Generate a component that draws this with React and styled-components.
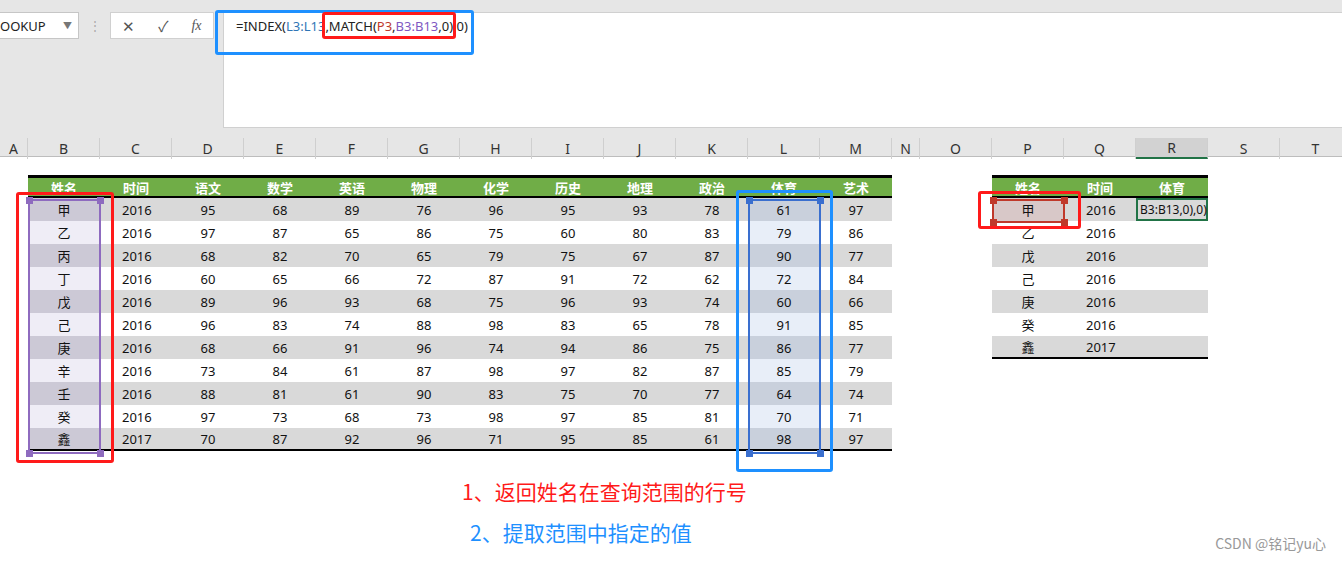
import React from "react";
import styled, { createGlobalStyle, css } from "styled-components";

const Global = createGlobalStyle`
  body { margin: 0; font-family: "Noto Sans", "Noto Sans CJK SC", sans-serif; background: #fff; }
  * { box-sizing: border-box; }
`;

const Page = styled.div`
  width: 1342px; height: 563px; position: relative; overflow: hidden; background: #fff;
`;
const Top = styled.div`
  height: 138px; background: #e6e6e6; display: flex; align-items: flex-start; padding-top: 12px; position: relative;
`;
const NameBox = styled.div`
  width: 79px; height: 27px; background: #fff; border: 1px solid #c6c6c6; border-left: none;
  display: flex; align-items: center; justify-content: space-between; padding: 0 6px 0 0;
  font-size: 13px; color: #222;
`;
const Caret = styled.span`color: #777; font-size: 9px;`;
const Dots = styled.div`
  width: 31px; text-align: center; color: #aaa; font-size: 12px; line-height: 27px;
`;
const Buttons = styled.div`
  width: 104px; height: 27px; background: #fff; border: 1px solid #d0d0d0; display: flex; align-items: center; justify-content: space-around; color: #555; font-size: 15px;
`;
const Fx = styled.i`font-family: "Liberation Serif", serif; font-size: 14px;`;
const Formula = styled.div`
  margin-left: 9px; flex: 1; height: 116px; background: #fff; border: 1px solid #d0d0d0; border-right: none;
  padding: 4px 0 0 12px; font-size: 13px; color: #222;
`;
const Ref = styled.span`color: ${p => p.c};`;

const ColHeads = styled.div`
  display: grid; grid-template-columns: 28px repeat(12, 72px) 28px repeat(6, 72px); height: 19px;
  background: #e6e6e6; border-bottom: 1px solid #bdbdbd;
`;
const ColHead = styled.div`
  display: flex; align-items: center; justify-content: center; font-size: 14px; color: #333;
  border-right: 1px solid #cfcfcf;
  ${p => p.$sel && css`background: #d2d2d2; border-bottom: 2px solid #217346;`}
`;

const Grid = styled.div`
  display: grid; grid-template-columns: 28px repeat(12, 72px) 28px repeat(6, 72px);
  grid-auto-rows: 23px; padding-top: 18px; position: relative;
`;
const Cell = styled.div`
  display: flex; align-items: center; justify-content: ${p => p.$left ? "flex-start" : "center"};
  padding-left: ${p => p.$left ? "22px" : "0"};
  font-size: 13px; color: #111; background: ${p => p.$bg || "transparent"};
  ${p => p.$head && css`background: #70ad47; color: #fff; font-weight: bold; border-top: 3px solid #000; border-bottom: 2px solid #000;`}
  ${p => p.$last && css`border-bottom: 2px solid #000;`}
  ${p => p.$edit && css`border: 2px solid #217346; font-size: 12px; padding-left: 2px; justify-content: flex-start;`}
`;
const Box = styled.div`
  position: absolute; border: ${p => p.$w || 3}px solid ${p => p.$c}; border-radius: ${p => p.$r ?? 3}px;
  pointer-events: none;
`;
const Handle = styled.div`
  position: absolute; width: 7px; height: 7px; background: ${p => p.$c};
`;
const Note = styled.div`
  position: absolute; font-size: 21px; color: ${p => p.$c}; font-family: "Noto Sans CJK SC", sans-serif;
`;
const Mark = styled.div`
  position: absolute; right: 16px; bottom: 10px; font-size: 14px; color: #999; font-family: "Noto Sans CJK SC", sans-serif;
`;

const names = ["甲","乙","丙","丁","戊","己","庚","辛","壬","癸","鑫"];
const data = [
  [95,68,89,76,96,95,93,78,61,97],[97,87,65,86,75,60,80,83,79,86],[68,82,70,65,79,75,67,87,90,77],
  [60,65,66,72,87,91,72,62,72,84],[89,96,93,68,75,96,93,74,60,66],[96,83,74,88,98,83,65,78,91,85],
  [68,66,91,96,74,94,86,75,86,77],[73,84,61,87,98,97,82,87,85,79],[88,81,61,90,83,75,70,77,64,74],
  [97,73,68,73,98,97,85,81,70,71],[70,87,92,96,71,95,85,61,98,97],
];
const heads = ["姓名","时间","语文","数学","英语","物理","化学","历史","地理","政治","体育","艺术"];
const right = [["甲","2016"],["乙","2016"],["戊","2016"],["己","2016"],["庚","2016"],["癸","2016"],["鑫","2017"]];
const cols = ["A","B","C","D","E","F","G","H","I","J","K","L","M","N","O","P","Q","R","S","T"];

function rowCells(r) {
  const cells = [];
  const grey = r % 2 === 0;
  const base = grey ? "#d9d9d9" : "#fff";
  cells.push(<Cell key="a" />);
  if (r === -1) {
    heads.forEach((h, i) => cells.push(<Cell key={"h" + i} $head>{h}</Cell>));
  } else if (r < 11) {
    const vals = [names[r], r === 10 ? "2017" : "2016", ...data[r]];
    vals.forEach((v, i) => {
      let bg = base;
      if (i === 0) bg = grey ? "#ccc9d6" : "#efedf6";
      if (i === 10) bg = grey ? "#c9d0dc" : "#e8eef8";
      cells.push(<Cell key={"d" + i} $bg={bg} $left={i === 1} $last={r === 10}>{v}</Cell>);
    });
  } else {
    for (let i = 0; i < 12; i++) cells.push(<Cell key={"e" + i} />);
  }
  cells.push(<Cell key="n" />, <Cell key="o" />);
  if (r === -1) {
    ["姓名","时间","体育"].forEach((h, i) => cells.push(<Cell key={"rh" + i} $head>{h}</Cell>));
  } else if (r < 7) {
    const [n, y] = right[r];
    cells.push(<Cell key="p" $bg={r === 0 ? "#d8c8c8" : base} $last={r === 6}>{n}</Cell>);
    cells.push(<Cell key="q" $bg={base} $left $last={r === 6}>{y}</Cell>);
    cells.push(<Cell key="r" $bg={base} $last={r === 6} $edit={r === 0}>{r === 0 ? "B3:B13,0),0)" : ""}</Cell>);
  } else {
    cells.push(<Cell key="p" />, <Cell key="q" />, <Cell key="r" />);
  }
  cells.push(<Cell key="s" />, <Cell key="t" />);
  return cells;
}

function Handles({ x1, y1, x2, y2, c }) {
  return [[x1, y1], [x2, y1], [x1, y2], [x2, y2]].map(([x, y], i) => (
    <Handle key={i} $c={c} style={{ left: x - 3, top: y - 3 }} />
  ));
}

export default function App() {
  return (
    <Page>
      <Global />
      <Top>
        <NameBox>OOKUP <Caret>▼</Caret></NameBox>
        <Dots>⋮</Dots>
        <Buttons><span>✕</span><span>✓</span><Fx>fx</Fx></Buttons>
        <Formula>
          =INDEX(<Ref c="#2f75b5">L3:L13</Ref>,MATCH(<Ref c="#c0392b">P3</Ref>,<Ref c="#7e57c2">B3:B13</Ref>,0),0)
        </Formula>
        <Box $c="#1e90ff" style={{ left: 215, top: 10, width: 259, height: 45 }} />
        <Box $c="#ff1a1a" style={{ left: 322, top: 12, width: 134, height: 27 }} />
      </Top>
      <ColHeads>
        {cols.map(c => <ColHead key={c} $sel={c === "R"}>{c}</ColHead>)}
      </ColHeads>
      <Grid>
        {rowCells(-1)}
        {Array.from({ length: 11 }, (_, r) => rowCells(r))}
      </Grid>
      <Box $c="#8e6bbf" $w={2} $r={0} style={{ left: 28, top: 199, width: 73, height: 255 }} />
      <Handles x1={29} y1={200} x2={100} y2={453} c="#8e6bbf" />
      <Box $c="#ff1a1a" style={{ left: 16, top: 192, width: 98, height: 271 }} />
      <Box $c="#3a6fcf" $w={2} $r={0} style={{ left: 748, top: 199, width: 73, height: 255 }} />
      <Handles x1={749} y1={200} x2={820} y2={453} c="#3a6fcf" />
      <Box $c="#1e90ff" style={{ left: 736, top: 190, width: 97, height: 282 }} />
      <Box $c="#c0392b" $w={2} $r={0} style={{ left: 992, top: 199, width: 73, height: 24 }} />
      <Handles x1={993} y1={200} x2={1064} y2={222} c="#c0392b" />
      <Box $c="#ff1a1a" style={{ left: 978, top: 191, width: 103, height: 38 }} />
      <Note $c="#ff1a1a" style={{ left: 462, top: 476 }}>1、返回姓名在查询范围的行号</Note>
      <Note $c="#1e90ff" style={{ left: 470, top: 517 }}>2、提取范围中指定的值</Note>
      <Mark>CSDN @铭记yu心</Mark>
    </Page>
  );
}
